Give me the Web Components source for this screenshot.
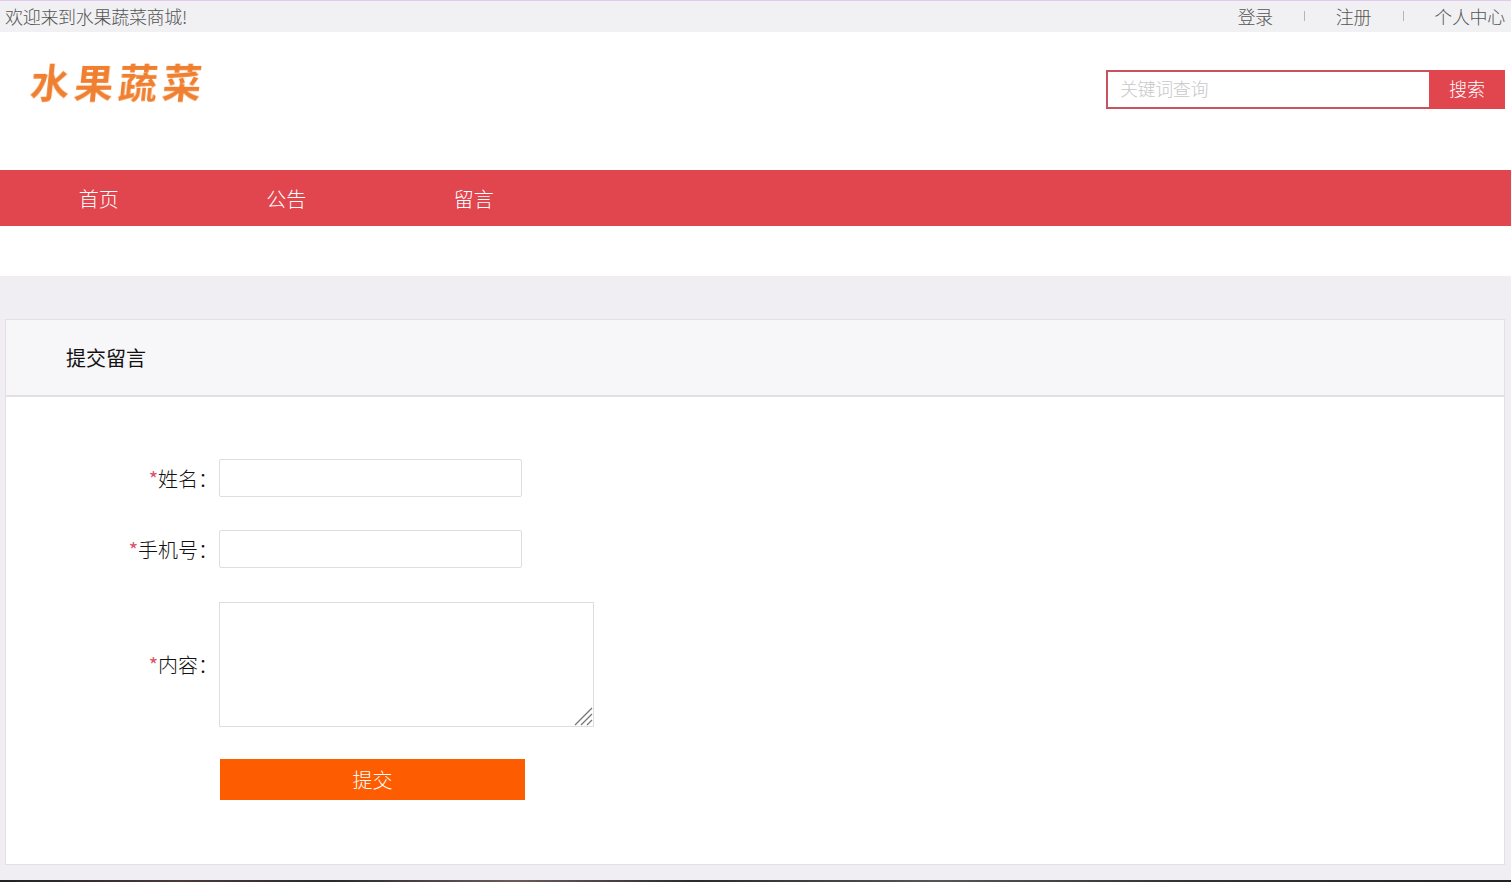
<!DOCTYPE html>
<html lang="zh">
<head>
<meta charset="utf-8">
<title>水果蔬菜商城</title>
<style>
  html, body { margin: 0; height: 882px; overflow: hidden; }
  body { background: #fff; font-family: "Noto Sans CJK SC", "Liberation Sans", sans-serif; }
</style>
</head>
<body>
<shop-topbar></shop-topbar>
<shop-header></shop-header>
<shop-nav></shop-nav>
<shop-main>
  <message-form></message-form>
</shop-main>

<script>
class ShopTopbar extends HTMLElement {
  connectedCallback() {
    this.attachShadow({ mode: 'open' }).innerHTML = `
      <style>
        :host {
          display: flex;
          justify-content: space-between;
          align-items: center;
          box-sizing: border-box;
          height: 32px;
          padding: 0 6px 2px 5px;
          background: #f1f1f3;
          border-top: 1px solid #e4c9f0;
          font-size: 18px;
          letter-spacing: -0.3px;
          color: #555;
          font-weight: 300;
        }
        .links { display: flex; align-items: center; }
        .sep { width: 1px; height: 10px; background: #b5b5b5; margin: 0 31px; }
        .sep.second { margin: 0 30px 0 32px; }
      </style>
      <span>欢迎来到水果蔬菜商城!</span>
      <div class="links">
        <span>登录</span><i class="sep"></i>
        <span>注册</span><i class="sep second"></i>
        <span>个人中心</span>
      </div>
    `;
  }
}

class ShopHeader extends HTMLElement {
  connectedCallback() {
    this.attachShadow({ mode: 'open' }).innerHTML = `
      <style>
        :host {
          display: flex;
          justify-content: space-between;
          box-sizing: border-box;
          height: 138px;
          padding: 38px 6px 0 28px;
          background: #fff;
        }
        .logo {
          margin-top: -17px;
          height: 56px;
          line-height: 56px;
          font-size: 39px;
          font-weight: 700;
          letter-spacing: 5px;
          white-space: nowrap;
          color: #f08030;
          filter: blur(0.5px);
          transform: skewX(-6deg);
          transform-origin: left bottom;
        }
        .search { display: flex; height: 39px; }
        input {
          box-sizing: border-box;
          width: 323px;
          height: 39px;
          padding: 0 12px 3px;
          border: 2px solid #c9525f;
          border-right: 0;
          outline: none;
          background: #fff;
          letter-spacing: -0.4px;
          font: 300 18px "Noto Sans CJK SC", "Liberation Sans", sans-serif;
        }
        input::placeholder { color: #c8c8c8; opacity: 1; letter-spacing: -0.4px; }
        button {
          width: 76px;
          height: 39px;
          padding: 0 0 3px;
          border: 0;
          background: #e1454e;
          color: #fff;
          font: 300 18px "Noto Sans CJK SC", "Liberation Sans", sans-serif;
        }
      </style>
      <div class="logo">水果蔬菜</div>
      <div class="search">
        <input type="text" placeholder="关键词查询">
        <button type="button">搜索</button>
      </div>
    `;
  }
}

class ShopNav extends HTMLElement {
  connectedCallback() {
    this.attachShadow({ mode: 'open' }).innerHTML = `
      <style>
        :host {
          display: flex;
          box-sizing: border-box;
          height: 56px;
          margin-bottom: 50px;
          padding-left: 5px;
          background: #e1454e;
          color: #fff;
          font-size: 20px;
          font-weight: 300;
        }
        a { width: 187.5px; line-height: 58px; text-align: center; }
      </style>
      <a>首页</a><a>公告</a><a>留言</a>
    `;
  }
}

class ShopMain extends HTMLElement {
  connectedCallback() {
    this.attachShadow({ mode: 'open' }).innerHTML = `
      <style>
        :host {
          display: block;
          box-sizing: border-box;
          height: 606px;
          padding: 43px 6px 0 5px;
          background: #f0eef2;
          position: relative;
        }
        .strip {
          position: absolute;
          left: 0;
          right: 0;
          bottom: 0;
          height: 2px;
          background: linear-gradient(90deg, #222 0, #4a3a3a 12%, #2a2a2a 22%, #6b5a5a 34%, #2b2b2b 46%, #555 62%, #333 78%, #222 100%);
        }
      </style>
      <slot></slot>
      <div class="strip"></div>
    `;
  }
}

class MessageForm extends HTMLElement {
  connectedCallback() {
    this.attachShadow({ mode: 'open' }).innerHTML = `
      <style>
        :host { display: block; font-size: 20px; color: #111; }
        .title {
          box-sizing: border-box;
          height: 78px;
          padding-left: 60px;
          line-height: 76px;
          border: 1px solid #e2e0e5;
          border-bottom-width: 2px;
          background: #f7f6f9;
        }
        .body {
          box-sizing: border-box;
          height: 468px;
          padding-top: 62px;
          background: #fff;
          border: 1px solid #e2e0e5;
          border-top: 0;
        }
        .row { display: flex; align-items: center; gap: 1px; }
        .row + .row { margin-top: 33px; }
        .row.area { margin-top: 34px; }
        .row.last { margin-top: 32px; }
        label { width: 212px; text-align: right; font-weight: 300; white-space: nowrap; }
        label b { color: #d9536a; font-weight: 400; font-size: 20px; }
        input, textarea {
          box-sizing: border-box;
          display: block;
          background: #fff;
          border: 1px solid #dedede;
          outline: none;
          margin: 0;
        }
        input { width: 303px; height: 38px; border-radius: 2px; }
        .ta { position: relative; }
        textarea { width: 375px; height: 125px; resize: none; }
        .grip { position: absolute; right: 1px; bottom: 1px; width: 19px; height: 19px; }
        button {
          width: 305px;
          height: 41px;
          margin-left: 1px;
          padding: 0;
          border: 0;
          background: #fd5c00;
          color: #fff;
          font: 300 20px "Noto Sans CJK SC", "Liberation Sans", sans-serif;
        }
      </style>
      <div class="title">提交留言</div>
      <div class="body">
        <div class="row"><label><b>*</b>姓名：</label><input type="text"></div>
        <div class="row"><label><b>*</b>手机号：</label><input type="text"></div>
        <div class="row area"><label><b>*</b>内容：</label>
          <div class="ta">
            <textarea></textarea>
            <svg class="grip" viewBox="0 0 19 19" fill="none" stroke="#777" stroke-width="1.3">
              <path d="M1 18 18 1M7 18 18 7M13 18 18 13"/>
            </svg>
          </div>
        </div>
        <div class="row last"><label></label><button type="button">提交</button></div>
      </div>
    `;
  }
}

customElements.define('shop-topbar', ShopTopbar);
customElements.define('shop-header', ShopHeader);
customElements.define('shop-nav', ShopNav);
customElements.define('shop-main', ShopMain);
customElements.define('message-form', MessageForm);
</script>
</body>
</html>
